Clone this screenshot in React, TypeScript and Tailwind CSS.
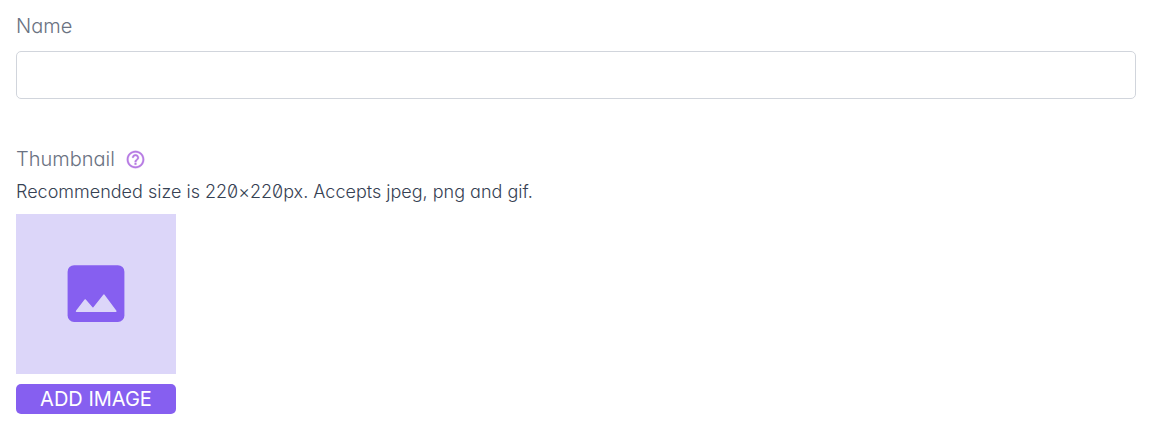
import React from "react";

function PictureIcon() {
  return (
    <svg viewBox="0 0 58 58" className="size-[58px]" aria-hidden="true">
      <rect x="0.6" y="0.2" width="56.8" height="56.8" rx="6.5" fill="#865ff0" />
      <path
        d="M9.6 46.2 18.2 35 26 44 36.9 30.2 48.8 46.2Z"
        fill="#dcd6f9"
        stroke="#dcd6f9"
        strokeWidth="1.6"
        strokeLinejoin="round"
      />
    </svg>
  );
}

function HelpIcon() {
  return (
    <svg viewBox="0 0 24 24" className="size-[21px]" fill="currentColor" stroke="currentColor" strokeWidth="0.3" aria-hidden="true">
      <path d="M11 18h2v-2h-2v2zm1-16C6.48 2 2 6.48 2 12s4.48 10 10 10 10-4.48 10-10S17.52 2 12 2zm0 18c-4.41 0-8-3.59-8-8s3.59-8 8-8 8 3.59 8 8-3.59 8-8 8zm0-14c-2.21 0-4 1.79-4 4h2c0-1.1.9-2 2-2s2 .9 2 2c0 2-3 1.75-3 5h2c0-2.25 3-2.5 3-5 0-2.21-1.79-4-4-4z" />
    </svg>
  );
}

export default function App() {
  return (
    <form className="pt-3 pr-[15px] pb-4 pl-4 font-['Inter',sans-serif] font-light [font-feature-settings:'cv11','zero','calt'_0]">
      <label htmlFor="name" className="block text-xl leading-7 text-gray-500">
        Name
      </label>
      <input
        id="name"
        type="text"
        className="mt-[11px] block h-12 w-full rounded-[5px] border border-gray-300 bg-white px-3 text-lg text-gray-700"
      />
      <div className="mt-[46px] flex items-center gap-2.5 text-xl leading-7 text-gray-500">
        <span id="thumbnail-label">Thumbnail</span>
        <button type="button" aria-label="Thumbnail help" className="text-[#b77be3]">
          <HelpIcon />
        </button>
      </div>
      <p className="mt-[5px] text-lg leading-7 text-gray-700">
        Recommended size is 220×220px. Accepts jpeg, png and gif.
      </p>
      <div className="mt-2 flex size-40 items-center justify-center bg-[#dcd6f9]">
        <PictureIcon />
      </div>
      <button
        type="button"
        aria-describedby="thumbnail-label"
        className="mt-[10px] block h-[30px] w-40 rounded-[5px] bg-[#865ff0] text-xl leading-[30px] font-normal text-white"
      >
        ADD IMAGE
      </button>
    </form>
  );
}
